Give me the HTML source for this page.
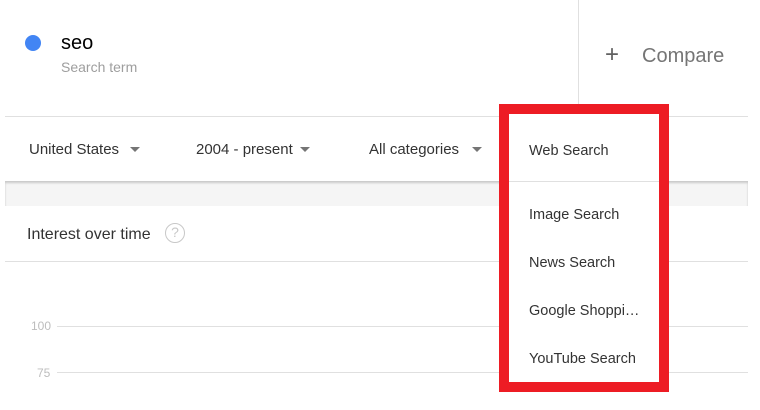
<!DOCTYPE html>
<html><head><style>
*{margin:0;padding:0;box-sizing:border-box}
body{width:760px;height:410px;background:#fff;position:relative;overflow:hidden;font-family:"Liberation Sans",Arial,sans-serif}
.a{position:absolute;white-space:nowrap}
.hl{position:absolute;height:1px;background:#e0e0e0}
.tri{position:absolute;width:0;height:0;border-left:5px solid transparent;border-right:5px solid transparent;border-top:5px solid #757575}
.f{font-size:15px;color:#333}
.m{font-size:14.5px;color:#333;left:529px}
</style></head><body>
<div class="a" style="left:25px;top:35px;width:16px;height:16px;border-radius:50%;background:#4285f4"></div>
<div class="a" style="left:61px;top:32px;font-size:20px;color:#000">seo</div>
<div class="a" style="left:61px;top:59px;font-size:14px;color:#9e9e9e">Search term</div>
<div class="a" style="left:578px;top:0;width:1px;height:116px;background:#e0e0e0"></div>
<div class="a" style="left:605px;top:41px;font-size:24px;color:#616161;font-weight:300">+</div>
<div class="a" style="left:642px;top:45px;font-size:20px;color:#757575">Compare</div>
<div class="hl" style="left:5px;top:116px;width:743px"></div>
<div class="a f" style="left:29px;top:141px">United States</div><div class="tri" style="left:130px;top:147px"></div>
<div class="a f" style="left:196px;top:141px">2004 - present</div><div class="tri" style="left:300px;top:147px"></div>
<div class="a f" style="left:369px;top:141px">All categories</div><div class="tri" style="left:472px;top:147px"></div>
<div class="a" style="left:5px;top:181px;width:743px;height:25px;background:#f5f5f5;box-shadow:inset 0 2px 2px rgba(0,0,0,.18)"></div>
<div class="a" style="left:27px;top:226px;font-size:16px;color:#333">Interest over time</div>
<div class="a" style="left:165px;top:223px;width:20px;height:20px;border:1.5px solid #c8c8c8;border-radius:50%;color:#c8c8c8;font-size:14px;text-align:center;line-height:17px">?</div>
<div class="hl" style="left:5px;top:261px;width:743px"></div>
<div class="a" style="left:31px;top:319px;font-size:12px;color:#bdbdbd">100</div>
<div class="hl" style="left:57px;top:326px;width:691px"></div>
<div class="a" style="left:37px;top:366px;font-size:12px;color:#bdbdbd">75</div>
<div class="hl" style="left:57px;top:372px;width:691px"></div>
<div class="a" style="left:509px;top:114px;width:150px;height:272px;background:#fff;box-shadow:0 1px 4px rgba(0,0,0,.25)"></div>
<div class="hl" style="left:509px;top:181px;width:150px"></div>
<div class="a m" style="top:143px">Web Search</div>
<div class="a m" style="top:207px">Image Search</div>
<div class="a m" style="top:255px">News Search</div>
<div class="a m" style="top:303px">Google Shoppi…</div>
<div class="a m" style="top:351px">YouTube Search</div>
<div class="a" style="left:499px;top:104px;width:170px;height:288px;border:10px solid #ed1c24"></div>
</body></html>
